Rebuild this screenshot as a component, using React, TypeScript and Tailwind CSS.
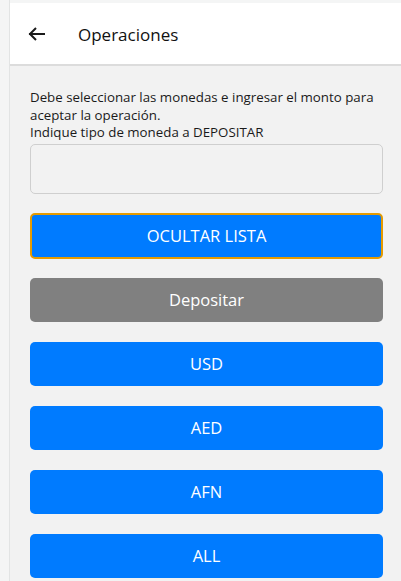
import React from "react";

export default function App() {
  const currencies = ["USD", "AED", "AFN", "ALL"];
  return (
    <div className="w-[401px] h-[581px] overflow-hidden bg-[#f4f5f5] flex" style={{ fontFamily: '"Open Sans", "Noto Sans", sans-serif' }}>
      <div className="w-[10px] shrink-0 border-r border-[#e2e4e4]" />
      <div className="flex-1 flex flex-col pt-[3px] min-w-0">
        <div className="h-[63px] shrink-0 bg-white border-b-2 border-[#dcdcdc] flex items-center">
          <svg width="18" height="16" viewBox="0 0 18 16" className="ml-[18px] mt-[1px]" fill="none" stroke="#1a1a1a" strokeWidth="2" strokeLinecap="square">
            <path d="M2 8h14" />
            <path d="M8 2L2 8l6 6" strokeLinecap="butt" />
          </svg>
          <span className="ml-[32px] text-[17px] font-medium text-[#111] mt-[2px]">Operaciones</span>
        </div>
        <div className="flex-1 bg-[#f2f2f2] pl-[20px] pr-[18px] pt-[23px] flex flex-col">
          <p className="text-[13.3px] leading-[17.5px] text-[#1a1a1a]">
            Debe seleccionar las monedas e ingresar el monto para aceptar la operación.
            <br />
            Indique tipo de moneda a DEPOSITAR
          </p>
          <div className="mt-[2px] h-[50px] shrink-0 rounded-[5px] border border-[#cfcfcf] bg-[#f2f2f2]" />
          <button className="mt-[19px] h-[46px] shrink-0 pt-[2px] rounded-[5px] border-2 border-[#e69b00] bg-[#007bff] text-white text-[16.5px]">OCULTAR LISTA</button>
          <button className="mt-[19px] h-[44px] shrink-0 pt-[2px] rounded-[5px] bg-[#808080] text-white text-[16.5px]">Depositar</button>
          {currencies.map((c) => (
            <button key={c} className="mt-[20px] h-[44px] shrink-0 pt-[2px] rounded-[5px] bg-[#007bff] text-white text-[16.5px]">{c}</button>
          ))}
        </div>
      </div>
    </div>
  );
}
